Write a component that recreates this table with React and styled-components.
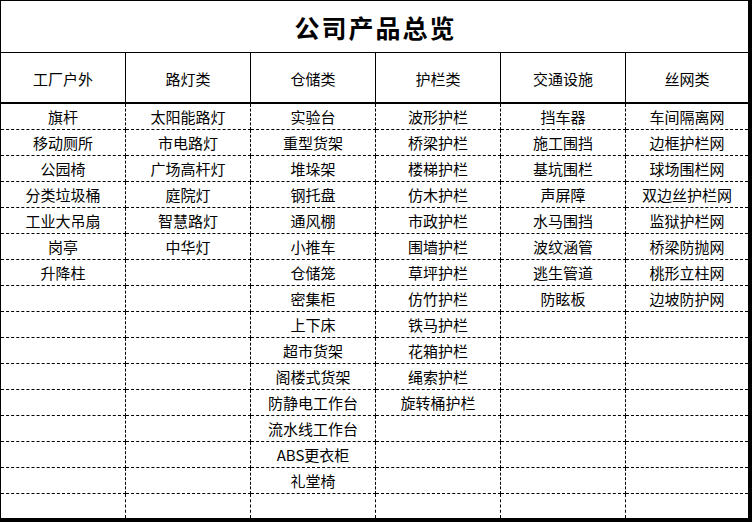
import React from "react";
import styled, { createGlobalStyle } from "styled-components";

const GlobalStyle = createGlobalStyle`
  html, body {
    margin: 0;
    padding: 0;
    background: #fff;
  }
  body {
    font-family: "Noto Sans CJK SC", "Noto Sans", sans-serif;
    color: #000;
  }
`;

const Sheet = styled.div`
  display: grid;
  grid-template-columns: repeat(5, 125px) 122px;
  grid-template-rows: 52px 51px repeat(15, 26px) 24px;
  width: 752px;
  height: 522px;
  box-sizing: border-box;
  border-left: 1px solid #000;
  border-top: 1px solid #000;
  border-right: 4px solid #000;
  border-bottom: 4px solid #000;
  background: #fff;
`;

const Title = styled.div`
  grid-column: 1 / -1;
  display: flex;
  align-items: center;
  justify-content: center;
  border-bottom: 1px solid #000;
  font-size: 25px;
  font-weight: 700;
  letter-spacing: 2px;
  padding-left: 2px;
`;

const HeadCell = styled.div`
  display: flex;
  align-items: center;
  justify-content: center;
  box-sizing: border-box;
  border-bottom: 2px solid #000;
  border-right: ${({ $last }) => ($last ? "none" : "1px solid #000")};
  font-size: 15px;
  padding-top: 1px;
`;

const Cell = styled.div`
  display: flex;
  align-items: center;
  justify-content: center;
  box-sizing: border-box;
  border-bottom: ${({ $lastRow }) => ($lastRow ? "none" : "1px dashed #000")};
  border-right: ${({ $last }) => ($last ? "none" : "1px dashed #000")};
  font-size: 15px;
  white-space: nowrap;
`;

const headers = ["工厂户外", "路灯类", "仓储类", "护栏类", "交通设施", "丝网类"];

const columns = [
  ["旗杆", "移动厕所", "公园椅", "分类垃圾桶", "工业大吊扇", "岗亭", "升降柱"],
  ["太阳能路灯", "市电路灯", "广场高杆灯", "庭院灯", "智慧路灯", "中华灯"],
  [
    "实验台",
    "重型货架",
    "堆垛架",
    "钢托盘",
    "通风棚",
    "小推车",
    "仓储笼",
    "密集柜",
    "上下床",
    "超市货架",
    "阁楼式货架",
    "防静电工作台",
    "流水线工作台",
    "ABS更衣柜",
    "礼堂椅",
  ],
  [
    "波形护栏",
    "桥梁护栏",
    "楼梯护栏",
    "仿木护栏",
    "市政护栏",
    "围墙护栏",
    "草坪护栏",
    "仿竹护栏",
    "铁马护栏",
    "花箱护栏",
    "绳索护栏",
    "旋转桶护栏",
  ],
  ["挡车器", "施工围挡", "基坑围栏", "声屏障", "水马围挡", "波纹涵管", "逃生管道", "防眩板"],
  ["车间隔离网", "边框护栏网", "球场围栏网", "双边丝护栏网", "监狱护栏网", "桥梁防抛网", "桃形立柱网", "边坡防护网"],
];

const ROWS = 16;

const App = () => {
  const rows = Array.from({ length: ROWS }, (_, r) => r);
  return (
    <>
      <GlobalStyle />
      <Sheet>
        <Title>公司产品总览</Title>
        {headers.map((h, i) => (
          <HeadCell key={h} $last={i === headers.length - 1}>
            {h}
          </HeadCell>
        ))}
        {rows.map((r) =>
          columns.map((col, c) => (
            <Cell
              key={`${r}-${c}`}
              $last={c === columns.length - 1}
              $lastRow={r === ROWS - 1}
            >
              {col[r] || ""}
            </Cell>
          ))
        )}
      </Sheet>
    </>
  );
};

export default App;
